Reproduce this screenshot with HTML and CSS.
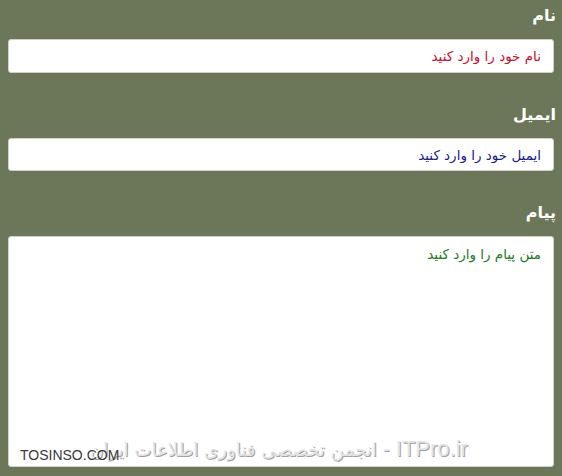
FILE: index.html
```html
<!DOCTYPE html>
<html lang="fa" dir="rtl">
<head>
<meta charset="utf-8">
<link rel="stylesheet" href="styles.css">
</head>
<body>
<form class="form">
  <div class="field">
    <label class="label">نام</label>
    <input class="input name" type="text" placeholder="نام خود را وارد کنید">
  </div>
  <div class="field">
    <label class="label">ایمیل</label>
    <input class="input email" type="text" placeholder="ایمیل خود را وارد کنید">
  </div>
  <div class="field">
    <label class="label">پیام</label>
    <textarea class="input message" placeholder="متن پیام را وارد کنید"></textarea>
  </div>
</form>
<div class="wm-itpro"><span class="wm-latin">ITPro.ir</span> - <span class="wm-fa">انجمن تخصصی فناوری اطلاعات ایران</span></div>
<div class="wm-tosinso" dir="ltr">TOSINSO.COM</div>
</body>
</html>
```
FILE: styles.css
```css
html, body {
  margin: 0;
  padding: 0;
}
body {
  background: #6c7658;
  padding: 8px;
  width: 562px;
  height: 476px;
  box-sizing: border-box;
  overflow: hidden;
  font-family: "DejaVu Sans", sans-serif;
  position: relative;
}
.form {
  display: flex;
  flex-direction: column;
}
.field {
  display: flex;
  flex-direction: column;
}
.label {
  color: #ffffff;
  font-weight: bold;
  font-size: 16px;
  line-height: 20px;
  margin: -2px -2px 13px 0;
  text-align: right;
}
.input {
  box-sizing: border-box;
  width: 100%;
  height: 34px;
  border: 1px solid #d0d0d0;
  border-radius: 3px;
  background: #fff;
  padding: 0 12px;
  font-family: "DejaVu Sans", sans-serif;
  font-size: 13.5px;
  margin-bottom: 34px;
  outline: none;
}
.email { height: 33px; }
.name::placeholder { color: #c8102e; opacity: 1; }
.email::placeholder { color: #1a1a8c; opacity: 1; }
.message {
  height: 231px;
  resize: none;
  padding: 9px 12px;
  margin-bottom: 0;
}
.message::placeholder { color: #1c7a1c; opacity: 1; }
.wm-itpro {
  position: absolute;
  left: 90px;
  top: 436px;
  font-family: "DejaVu Sans", sans-serif;
  font-size: 19px;
  color: #e4e4e4;
  text-shadow: 1px 1px 0 #a0a0a0;
  white-space: nowrap;
}
.wm-latin {
  font-family: "Liberation Sans", sans-serif;
  font-size: 22px;
}
.wm-fa {
  font-size: 18.2px;
}
.wm-tosinso {
  position: absolute;
  left: 20px;
  top: 447px;
  font-family: "Liberation Sans", sans-serif;
  font-size: 14px;
  color: #3a3a3a;
  white-space: nowrap;
}
```
